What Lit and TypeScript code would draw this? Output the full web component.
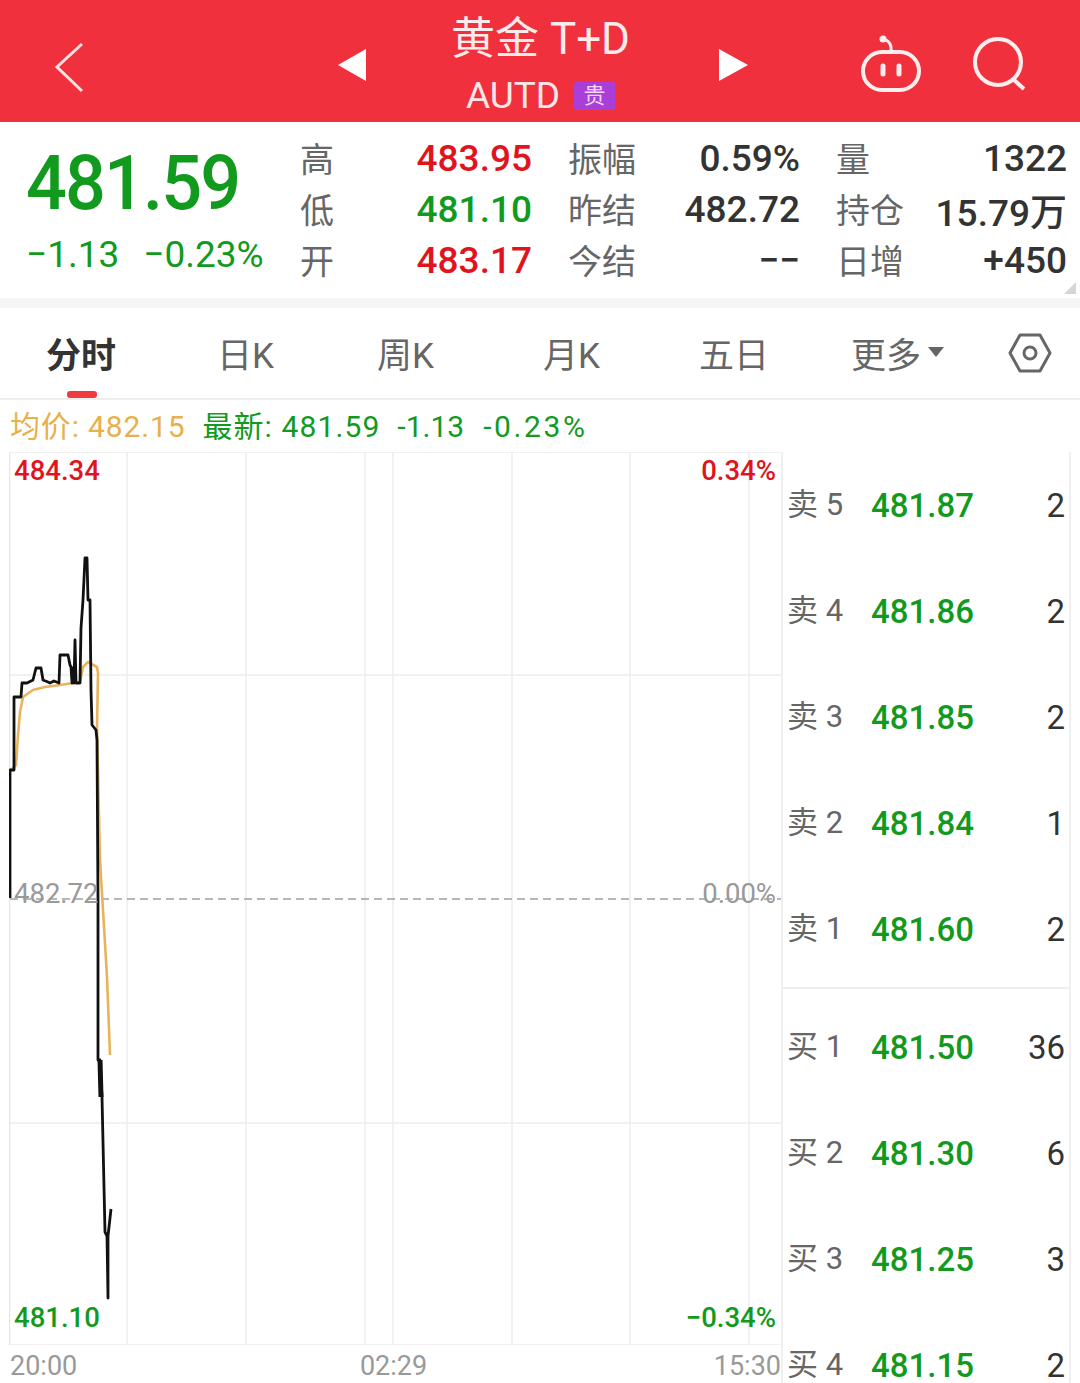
import { LitElement, html, css, svg } from "lit";
import { customElement } from "lit/decorators.js";

const BLACK = "10,898 10,770 14,770 14,697 21,697 22,683 27,683 33,680 36,668 41,668 43,680 48,682 50,683 54,681 59,683 60,655 68,655 70,665 71,667 72,683 73,668 74,683 75,640 76,683 80,683 81,628 83,600 85,558 87,558 88,600 90,600 91,690 92,725 96,730 97,740 98,900 98,1060 100,1060 102,1097 105,1232 107,1236 108,1298 108,1236 111,1209";
const AVG = "11,770 16,765 18,735 20,712 23,697 33,690 45,687 60,685 80,682 83,667 88,662 97,667 98,673 97,727 100,860 103,910 107,977 110,1055";
const VLINES = [127, 246, 365, 393, 512, 630, 749];
const HLINES = [452, 675, 1123, 1345];

const STATS = [
  ["高", "483.95", "up", "振幅", "0.59%", "", "量", "1322", ""],
  ["低", "481.10", "down", "昨结", "482.72", "", "持仓", "15.79万", ""],
  ["开", "483.17", "up", "今结", "−−", "", "日增", "+450", ""],
];
const TABS = ["分时", "日K", "周K", "月K", "五日"];
const SELL = [["卖 5", "481.87", "2"], ["卖 4", "481.86", "2"], ["卖 3", "481.85", "2"], ["卖 2", "481.84", "1"], ["卖 1", "481.60", "2"]];
const BUY = [["买 1", "481.50", "36"], ["买 2", "481.30", "6"], ["买 3", "481.25", "3"], ["买 4", "481.15", "2"]];

@customElement("app-root")
export class AppRoot extends LitElement {
  static styles = css`
    :host { display: block; width: 1080px; height: 1383px; overflow: hidden; background: #fff; font-family: Roboto, "Noto Sans CJK SC", sans-serif; color: #333; }
    .header { height: 122px; background: #f0303c; display: grid; grid-template-columns: 338px 28px 1fr 29px 332px; align-items: center; color: #fff; }
    .header svg { display: block; }
    .title { display: flex; flex-direction: column; align-items: center; margin-right: 4px; }
    .name { font-size: 44px; line-height: 50px; margin-top: 14px; color: #fdeaea; }
    .sub { display: flex; align-items: center; gap: 14px; font-size: 37px; line-height: 44px; margin-top: 10px; color: #fde6e6; margin-bottom: 5px; }
    .badge { width: 41px; height: 28px; background: #a93fd8; color: #f6d5f5; font-size: 22px; line-height: 28px; text-align: center; border-radius: 2px; }
    .right { display: flex; align-items: center; padding-left: 113px; gap: 51px; }
    .stats { height: 176px; display: flex; position: relative; padding-left: 26px; box-sizing: border-box; }
    .lead { width: 275px; flex: none; }
    .big { font-size: 72px; font-weight: 500; letter-spacing: -1.9px; line-height: 80px; margin-top: 22px; color: #129a1e; transform: scaleY(1.06); transform-origin: center; }
    .chg { display: flex; gap: 24px; font-size: 37px; line-height: 44px; margin-top: 9px; color: #129a1e; }
    .table { display: grid; grid-template-columns: 231px 231px 230px; column-gap: 37px; grid-auto-rows: 51px; padding-top: 11px; }
    .cell { display: flex; justify-content: space-between; align-items: center; }
    .lbl { font-size: 34px; line-height: 1; color: #666; position: relative; top: 1px; left: -1px; }
    .val { font-size: 37px; font-weight: 500; color: #333; }
    .up { color: #e0141c; }
    .down { color: #129a1e; }
    .corner { position: absolute; right: 4px; bottom: 4px; width: 0; height: 0; border-left: 12px solid transparent; border-bottom: 12px solid #d5d5d5; }
    .gap { height: 10px; background: #f5f5f5; }
    .tabs { height: 92px; box-sizing: border-box; border-bottom: 2px solid #efefef; display: grid; grid-template-columns: 171px 160px 166px 156px 152px 156px auto; padding-left: 47px; align-items: center; position: relative; font-size: 35px; color: #666; }
    .tab { display: flex; align-items: center; position: relative; top: -1px; left: -1px; }
    .tab.active { color: #333; font-weight: 700; }
    .bar { position: absolute; left: 67px; bottom: 0; width: 30px; height: 7px; border-radius: 3px; background: #ef3b3f; }
    .caret { width: 0; height: 0; border-left: 8px solid transparent; border-right: 8px solid transparent; border-top: 10px solid #666; margin-left: 7px; }
    .legend { height: 52px; display: flex; align-items: center; padding-left: 10px; font-size: 30px; color: #129a1e; }
    .legend span { letter-spacing: 1.1px; margin-right: 17px; line-height: 1; position: relative; top: 1px; }
    .legend .avg { color: #e8b04a; letter-spacing: 0.85px; }
    .legend .tight { letter-spacing: 0; margin-right: 19px; }
    .legend .wide { letter-spacing: 2.6px; }
    .main { display: flex; }
    .left { width: 781px; flex: none; padding-left: 9px; box-sizing: border-box; }
    .chart { position: relative; width: 772px; height: 893px; }
    .chart svg { display: block; }
    .tag { position: absolute; font-size: 27.5px; line-height: 32px; font-weight: 500; }
    .tag.muted { color: #999; font-weight: 400; }
    .axis { display: flex; justify-content: space-between; font-size: 27px; line-height: 42px; color: #999; padding-left: 1px; }
    .axis .mid { margin-right: 4px; }
    .book { width: 290px; height: 931px; box-sizing: border-box; border-left: 2px solid #f0f0f0; border-right: 2px solid #f0f0f0; overflow: hidden; }
    .side { padding-bottom: 5px; }
    .side + .side { border-top: 2px solid #eee; padding-top: 5px; }
    .row { height: 106px; display: grid; grid-template-columns: 84px 1fr auto; align-items: center; padding: 0 4px 0 4px; line-height: 1; }
    .row .l { font-size: 31px; color: #666; position: relative; top: -1px; }
    .row .p { font-size: 33px; font-weight: 500; color: #129a1e; }
    .row .q { font-size: 33px; color: #333; }
  `;

  render() {
    return html`
      <div class="header">
        <svg width="338" height="122" viewBox="0 0 338 122"><path d="M82 43 57 66l25 24" fill="none" stroke="#fbe3e3" stroke-width="3"/></svg>
        <svg width="28" height="122" viewBox="0 0 28 122"><path d="M0 64 28 48v32z" fill="#fff"/></svg>
        <div class="title">
          <div class="name">黄金 T+D</div>
          <div class="sub">AUTD<span class="badge">贵</span></div>
        </div>
        <svg width="29" height="122" viewBox="0 0 29 122"><path d="M29 64 0 48v32z" fill="#fff"/></svg>
        <div class="right">
          <svg width="60" height="64" viewBox="0 0 60 64" fill="none" stroke="#fdeeee" stroke-width="4">
            <rect x="2" y="22" width="56" height="38" rx="19"/>
            <path d="M30 22c1-8-3-13-9-12" stroke-width="3"/><circle cx="22" cy="9" r="3.5" fill="#fdeeee" stroke="none"/>
            <path d="M22 36v8M38 36v8" stroke-linecap="round" stroke-width="5"/>
          </svg>
          <svg width="54" height="60" viewBox="0 0 54 60" fill="none" stroke="#fdeeee" stroke-width="4">
            <circle cx="26" cy="30" r="23"/><path d="M41 47 52 57"/>
          </svg>
        </div>
      </div>

      <div class="stats">
        <div class="lead">
          <div class="big">481.59</div>
          <div class="chg"><span>−1.13</span><span>−0.23%</span></div>
        </div>
        <div class="table">
          ${STATS.map((r) => [0, 3, 6].map((i) => html`
            <div class="cell"><span class="lbl">${r[i]}</span><span class="val ${r[i + 2]}">${r[i + 1]}</span></div>
          `))}
        </div>
        <div class="corner"></div>
      </div>
      <div class="gap"></div>

      <div class="tabs">
        ${TABS.map((t, i) => html`<div class="tab ${i === 0 ? "active" : ""}">${t}</div>`)}
        <div class="tab">更多<span class="caret"></span></div>
        <svg width="44" height="42" viewBox="0 0 44 42" fill="none" stroke="#666" stroke-width="3">
          <path d="M12 3h20l10 18-10 18H12L2 21z" stroke-linejoin="round"/><circle cx="22" cy="21" r="6"/>
        </svg>
        <div class="bar"></div>
      </div>

      <div class="legend">
        <span class="avg">均价: 482.15</span><span>最新: 481.59</span><span class="tight">-1.13</span><span class="wide">-0.23%</span>
      </div>

      <div class="main">
        <div class="left">
          <div class="chart">
            <svg width="772" height="893" viewBox="9 452 772 893" fill="none">
              ${VLINES.map((x) => svg`<path d="M${x} 452V1345" stroke="#ededed" stroke-width="1.5"/>`)}
              ${HLINES.map((y) => svg`<path d="M9 ${y}H781" stroke="#ededed" stroke-width="1.5"/>`)}
              <path d="M9.5 452V1345" stroke="#e6e6e6" stroke-width="1.5"/>
              <path d="M10 899H781" stroke="#a0a0a0" stroke-width="1.5" stroke-dasharray="8 5"/>
              <polyline points=${AVG} stroke="#e9b35c" stroke-width="2.6" stroke-linejoin="round"/>
              <polyline points=${BLACK} stroke="#111" stroke-width="2.8" stroke-linejoin="round"/>
              <path d="M100 1060 101 1097" stroke="#111" stroke-width="5"/>
            </svg>
            <span class="tag up" style="left:5px;top:3px">484.34</span>
            <span class="tag up" style="right:5px;top:3px">0.34%</span>
            <span class="tag muted" style="left:5px;top:426px">482.72</span>
            <span class="tag muted" style="right:5px;top:426px">0.00%</span>
            <span class="tag down" style="left:5px;top:850px">481.10</span>
            <span class="tag down" style="right:5px;top:850px">−0.34%</span>
          </div>
          <div class="axis"><span>20:00</span><span class="mid">02:29</span><span>15:30</span></div>
        </div>
        <div class="book">
          <div class="side">${SELL.map((r) => this.row(r))}</div>
          <div class="side">${BUY.map((r) => this.row(r))}</div>
        </div>
      </div>
    `;
  }

  private row(r: string[]) {
    return html`<div class="row"><span class="l">${r[0]}</span><span class="p">${r[1]}</span><span class="q">${r[2]}</span></div>`;
  }
}
